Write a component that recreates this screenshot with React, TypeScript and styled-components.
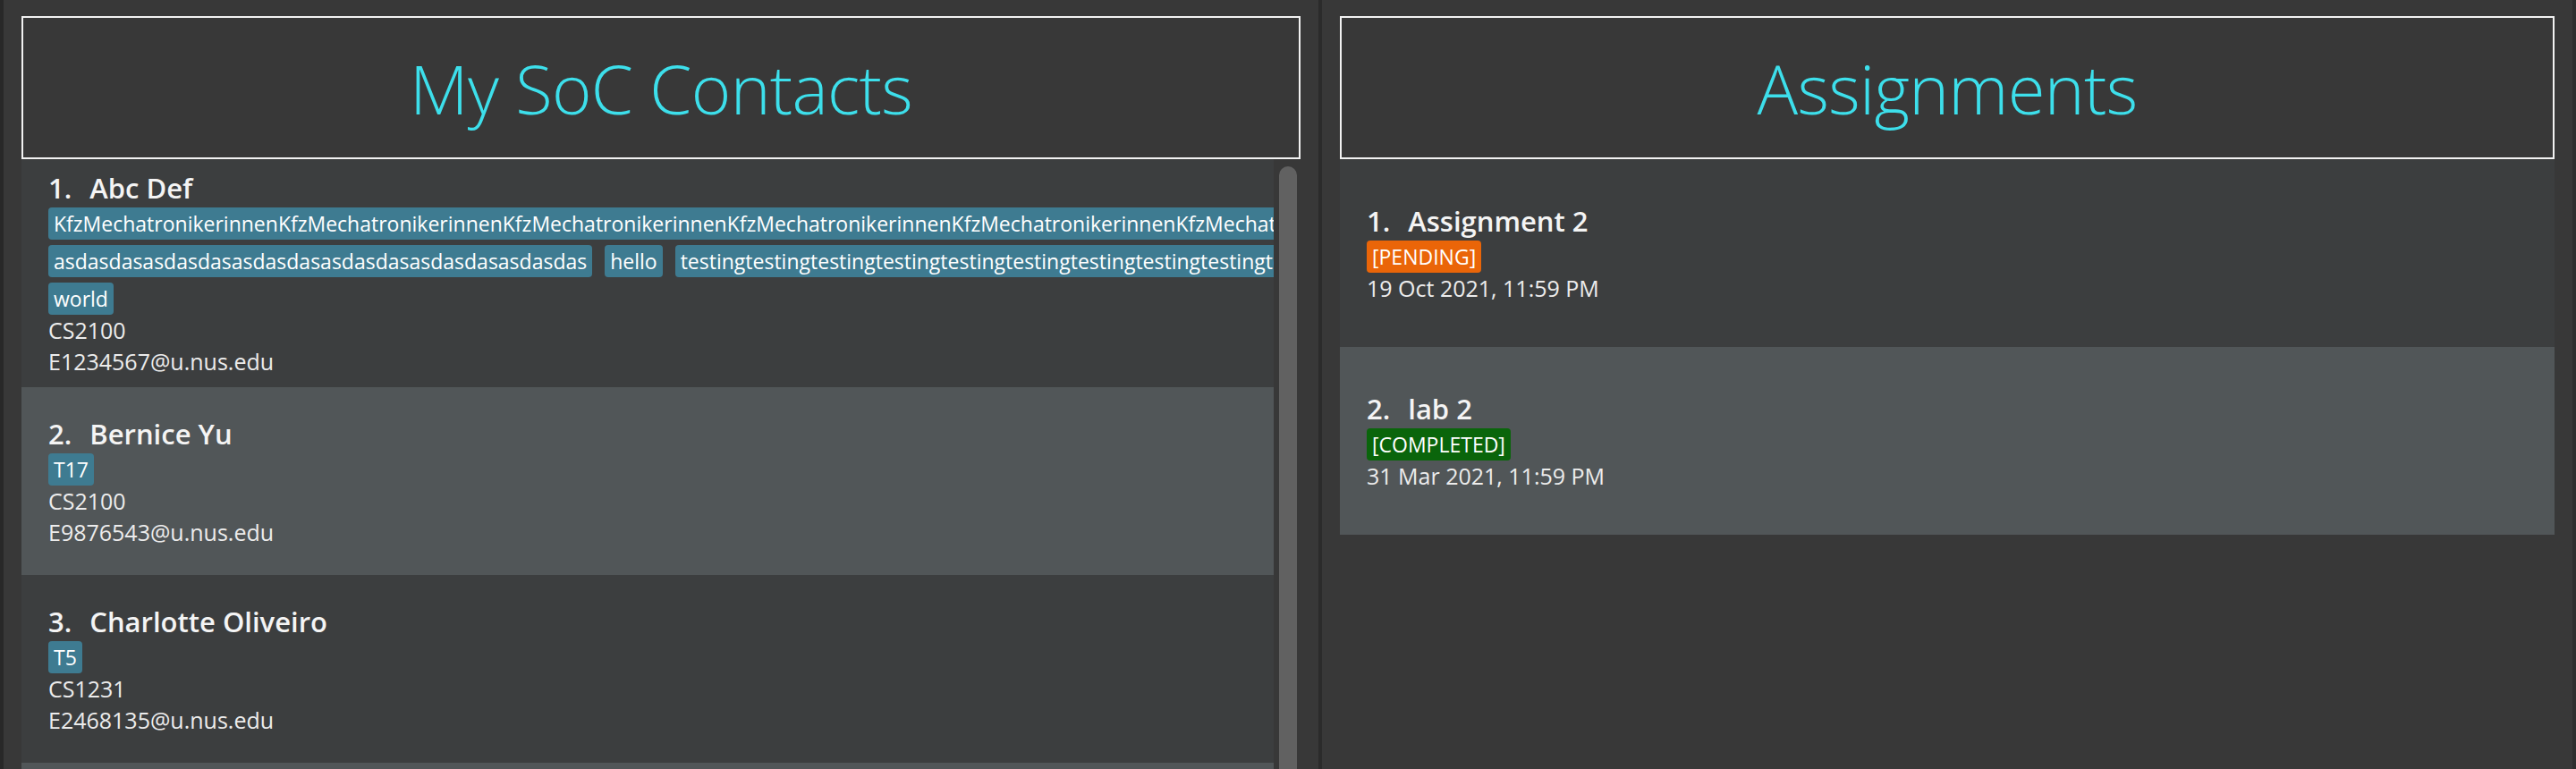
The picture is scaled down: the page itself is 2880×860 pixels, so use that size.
import React from "react";
import styled, { createGlobalStyle } from "styled-components";

const Global = createGlobalStyle`
  html, body { margin: 0; padding: 0; background: #383838; }
  body { font-family: "Open Sans", "Noto Sans", sans-serif; }
  * { box-sizing: border-box; }
`;

const Window = styled.div`
  width: 2880px;
  height: 860px;
  display: flex;
  overflow: hidden;
  background: #383838;
  border-left: 4px solid #282828;
  border-right: 4px solid #2e2e2e;
`;

const Pane = styled.section<{ $width: number }>`
  width: ${(p) => p.$width}px;
  flex: none;
  display: flex;
  flex-direction: column;
  padding: 18px 20px 0;
  min-height: 0;
`;

const Divider = styled.div`
  width: 4px;
  flex: none;
  background: #2b2b2b;
`;

const Header = styled.header`
  height: 160px;
  flex: none;
  border: 2px solid #f2f2f2;
  display: flex;
  align-items: center;
  justify-content: center;
  font-family: "Open Sans", sans-serif;
  font-weight: 300;
  font-size: 76px;
  letter-spacing: -0.7px;
  color: #3ddfeb;
  background: #383838;
`;

const ListArea = styled.div`
  flex: 1;
  min-height: 0;
  display: flex;
  overflow: hidden;
`;

const CardColumn = styled.div<{ $width?: number }>`
  ${(p) => (p.$width ? `width: ${p.$width}px; flex: none;` : "flex: 1;")}
  display: flex;
  flex-direction: column;
  overflow: hidden;
`;

const ScrollTrack = styled.div`
  flex: 1;
  padding: 8px 4px 0 6px;
  display: flex;
`;

const Thumb = styled.div`
  width: 20px;
  height: 900px;
  border-radius: 10px;
  background: #616161;
`;

const Card = styled.article<{ $odd: boolean }>`
  flex: none;
  min-height: 210px;
  padding: 11px 0 11px 30px;
  display: flex;
  flex-direction: column;
  justify-content: center;
  align-items: flex-start;
  overflow: hidden;
  background: ${(p) => (p.$odd ? "#515658" : "#3c3e3f")};
`;

const NameRow = styled.div`
  font-size: 31px;
  font-weight: 600;
  line-height: 43px;
  color: #f4f4f4;
  white-space: nowrap;
`;

const Name = styled.span`
  margin-left: 20px;
`;

const Tags = styled.div`
  width: 1530px;
  flex: none;
  display: flex;
  flex-wrap: wrap;
  column-gap: 14px;
  row-gap: 6px;
`;

const toneColor: Record<string, string> = {
  blue: "#3e7b91",
  orange: "#ea6508",
  green: "#0a650b",
};

const Tag = styled.span<{ $tone: "blue" | "orange" | "green" }>`
  flex: none;
  font-size: 23px;
  line-height: 32px;
  padding: 2px 6px;
  border-radius: 4px;
  color: #ffffff;
  white-space: nowrap;
  background: ${(p) => toneColor[p.$tone]};
`;

const Detail = styled.div`
  font-size: 25px;
  line-height: 35px;
  color: #ececec;
  white-space: nowrap;
`;

type Contact = { name: string; tags: string[]; module: string; email: string };

const contacts: Contact[] = [
  {
    name: "Abc Def",
    tags: [
      "KfzMechatronikerinnen".repeat(8),
      "asdasdas".repeat(6),
      "hello",
      "testing".repeat(11),
      "world",
    ],
    module: "CS2100",
    email: "E1234567@u.nus.edu",
  },
  { name: "Bernice Yu", tags: ["T17"], module: "CS2100", email: "E9876543@u.nus.edu" },
  { name: "Charlotte Oliveiro", tags: ["T5"], module: "CS1231", email: "E2468135@u.nus.edu" },
  { name: "David Li", tags: ["T9"], module: "CS2103T", email: "E1357924@u.nus.edu" },
];

type Assignment = { name: string; status: "PENDING" | "COMPLETED"; due: string };

const assignments: Assignment[] = [
  { name: "Assignment 2", status: "PENDING", due: "19 Oct 2021, 11:59 PM" },
  { name: "lab 2", status: "COMPLETED", due: "31 Mar 2021, 11:59 PM" },
];

export default function App() {
  return (
    <>
      <Global />
      <Window>
        <Pane $width={1470}>
          <Header>My SoC Contacts</Header>
          <ListArea>
            <CardColumn $width={1400}>
              {contacts.map((c, i) => (
                <Card key={c.name} $odd={i % 2 === 1}>
                  <NameRow>
                    {i + 1}.<Name>{c.name}</Name>
                  </NameRow>
                  <Tags>
                    {c.tags.map((t) => (
                      <Tag key={t} $tone="blue">
                        {t}
                      </Tag>
                    ))}
                  </Tags>
                  <Detail>{c.module}</Detail>
                  <Detail>{c.email}</Detail>
                </Card>
              ))}
            </CardColumn>
            <ScrollTrack>
              <Thumb />
            </ScrollTrack>
          </ListArea>
        </Pane>
        <Divider />
        <Pane $width={1398}>
          <Header>Assignments</Header>
          <ListArea>
            <CardColumn>
              {assignments.map((a, i) => (
                <Card key={a.name} $odd={i % 2 === 1}>
                  <NameRow>
                    {i + 1}.<Name>{a.name}</Name>
                  </NameRow>
                  <Tag $tone={a.status === "PENDING" ? "orange" : "green"}>[{a.status}]</Tag>
                  <Detail>{a.due}</Detail>
                </Card>
              ))}
            </CardColumn>
          </ListArea>
        </Pane>
      </Window>
    </>
  );
}
